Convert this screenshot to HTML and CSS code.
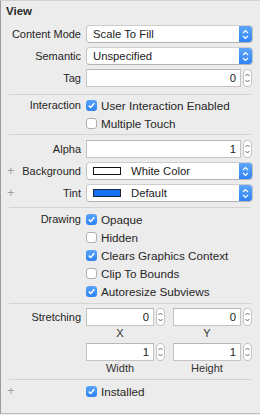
FILE: index.html
```html
<!DOCTYPE html>
<html lang="en">
<head>
    <meta charset="UTF-8">
    <title>View Attributes</title>
    <link rel="stylesheet" href="styles.css">
</head>
<body>

<div class="panel">
    <div class="header">View</div>

    <!-- content mode / semantic / tag -->
    <div class="section sec-top">
        <div class="row">
            <div class="label">Content Mode</div>
            <div class="popup"><span class="popup-text">Scale To Fill</span><span class="popup-arrows"><svg width="7" height="11" viewBox="0 0 7 11"><path d="M1 4 L3.5 1.5 L6 4 M1 7 L3.5 9.5 L6 7" fill="none" stroke="#fff" stroke-width="1.2"/></svg></span></div>
        </div>
        <div class="row">
            <div class="label">Semantic</div>
            <div class="popup"><span class="popup-text">Unspecified</span><span class="popup-arrows"><svg width="7" height="11" viewBox="0 0 7 11"><path d="M1 4 L3.5 1.5 L6 4 M1 7 L3.5 9.5 L6 7" fill="none" stroke="#fff" stroke-width="1.2"/></svg></span></div>
        </div>
        <div class="row">
            <div class="label">Tag</div>
            <div class="field-group">
                <div class="field">0</div>
                <div class="stepper"><svg width="7" height="14" viewBox="0 0 7 14"><path d="M1.5 5 L3.5 3 L5.5 5 M1.5 9 L3.5 11 L5.5 9" fill="none" stroke="#666" stroke-width="1"/></svg></div>
            </div>
        </div>
    </div>
    <div class="sep"></div>

    <!-- interaction -->
    <div class="section sec-checks">
        <div class="row check-row">
            <div class="label">Interaction</div>
            <span class="box on"><svg width="9" height="9" viewBox="0 0 9 9"><path d="M1.8 4.6 L3.7 6.5 L7.3 2.2" fill="none" stroke="#fff" stroke-width="1.5"/></svg></span>
            <span class="check-text">User Interaction Enabled</span>
        </div>
        <div class="row check-row">
            <div class="label"></div>
            <span class="box"></span>
            <span class="check-text">Multiple Touch</span>
        </div>
    </div>
    <div class="sep"></div>

    <!-- alpha / colors -->
    <div class="section sec-colors">
        <div class="row">
            <div class="label">Alpha</div>
            <div class="field-group">
                <div class="field">1</div>
                <div class="stepper"><svg width="7" height="14" viewBox="0 0 7 14"><path d="M1.5 5 L3.5 3 L5.5 5 M1.5 9 L3.5 11 L5.5 9" fill="none" stroke="#666" stroke-width="1"/></svg></div>
            </div>
        </div>
        <div class="row">
            <div class="label"><span class="plus">+</span>Background</div>
            <div class="popup"><span class="swatch white"></span><span class="popup-text">White Color</span><span class="popup-arrows"><svg width="7" height="11" viewBox="0 0 7 11"><path d="M1 4 L3.5 1.5 L6 4 M1 7 L3.5 9.5 L6 7" fill="none" stroke="#fff" stroke-width="1.2"/></svg></span></div>
        </div>
        <div class="row">
            <div class="label"><span class="plus">+</span>Tint</div>
            <div class="popup"><span class="swatch blue"></span><span class="popup-text">Default</span><span class="popup-arrows"><svg width="7" height="11" viewBox="0 0 7 11"><path d="M1 4 L3.5 1.5 L6 4 M1 7 L3.5 9.5 L6 7" fill="none" stroke="#fff" stroke-width="1.2"/></svg></span></div>
        </div>
    </div>
    <div class="sep"></div>

    <!-- drawing -->
    <div class="section sec-drawing">
        <div class="row check-row">
            <div class="label">Drawing</div>
            <span class="box on"><svg width="9" height="9" viewBox="0 0 9 9"><path d="M1.8 4.6 L3.7 6.5 L7.3 2.2" fill="none" stroke="#fff" stroke-width="1.5"/></svg></span>
            <span class="check-text">Opaque</span>
        </div>
        <div class="row check-row">
            <div class="label"></div>
            <span class="box"></span>
            <span class="check-text">Hidden</span>
        </div>
        <div class="row check-row">
            <div class="label"></div>
            <span class="box on"><svg width="9" height="9" viewBox="0 0 9 9"><path d="M1.8 4.6 L3.7 6.5 L7.3 2.2" fill="none" stroke="#fff" stroke-width="1.5"/></svg></span>
            <span class="check-text">Clears Graphics Context</span>
        </div>
        <div class="row check-row">
            <div class="label"></div>
            <span class="box"></span>
            <span class="check-text">Clip To Bounds</span>
        </div>
        <div class="row check-row">
            <div class="label"></div>
            <span class="box on"><svg width="9" height="9" viewBox="0 0 9 9"><path d="M1.8 4.6 L3.7 6.5 L7.3 2.2" fill="none" stroke="#fff" stroke-width="1.5"/></svg></span>
            <span class="check-text">Autoresize Subviews</span>
        </div>
    </div>
    <div class="sep"></div>

    <!-- stretching -->
    <div class="section sec-stretch">
        <div class="stretch-row">
            <div class="label">Stretching</div>
            <div class="pair">
                <div class="mini">
                    <div class="field-group">
                        <div class="field">0</div>
                        <div class="stepper"><svg width="7" height="14" viewBox="0 0 7 14"><path d="M1.5 5 L3.5 3 L5.5 5 M1.5 9 L3.5 11 L5.5 9" fill="none" stroke="#666" stroke-width="1"/></svg></div>
                    </div>
                    <div class="caption">X</div>
                </div>
                <div class="mini">
                    <div class="field-group">
                        <div class="field">0</div>
                        <div class="stepper"><svg width="7" height="14" viewBox="0 0 7 14"><path d="M1.5 5 L3.5 3 L5.5 5 M1.5 9 L3.5 11 L5.5 9" fill="none" stroke="#666" stroke-width="1"/></svg></div>
                    </div>
                    <div class="caption">Y</div>
                </div>
            </div>
        </div>
        <div class="stretch-row second">
            <div class="label"></div>
            <div class="pair">
                <div class="mini">
                    <div class="field-group">
                        <div class="field">1</div>
                        <div class="stepper"><svg width="7" height="14" viewBox="0 0 7 14"><path d="M1.5 5 L3.5 3 L5.5 5 M1.5 9 L3.5 11 L5.5 9" fill="none" stroke="#666" stroke-width="1"/></svg></div>
                    </div>
                    <div class="caption">Width</div>
                </div>
                <div class="mini">
                    <div class="field-group">
                        <div class="field">1</div>
                        <div class="stepper"><svg width="7" height="14" viewBox="0 0 7 14"><path d="M1.5 5 L3.5 3 L5.5 5 M1.5 9 L3.5 11 L5.5 9" fill="none" stroke="#666" stroke-width="1"/></svg></div>
                    </div>
                    <div class="caption">Height</div>
                </div>
            </div>
        </div>
    </div>
    <div class="sep"></div>

    <!-- installed -->
    <div class="section sec-installed">
        <div class="row check-row">
            <div class="label"><span class="plus">+</span></div>
            <span class="box on"><svg width="9" height="9" viewBox="0 0 9 9"><path d="M1.8 4.6 L3.7 6.5 L7.3 2.2" fill="none" stroke="#fff" stroke-width="1.5"/></svg></span>
            <span class="check-text">Installed</span>
        </div>
    </div>
</div>

</body>
</html>
```

FILE: styles.css
```css
body {
    margin: 0;
    padding: 0;
    background-color: #ececec;
    font-family: "Liberation Sans", Arial, sans-serif;
    font-size: 11px;
    color: #262626;
}
.panel {
    width: 259px;
    height: 412px;
    background-color: #ececec;
    border-left: 1px solid #9c9c9c;
    border-top: 1px solid #d2d2d2;
    border-bottom: 1px solid #bdbdbd;
}
.header {
    height: 22px;
    line-height: 21px;
    padding-left: 5px;
    font-weight: bold;
    font-size: 11.5px;
    color: #2a2a2a;
}
.sep {
    height: 1px;
    margin: 0 9px 0 8px;
    background-color: #d3d3d3;
}
.sec-top {
    padding-bottom: 5px;
}
.sec-checks {
    padding-top: 1px;
    padding-bottom: 2px;
}
.sec-colors {
    padding-top: 3px;
    padding-bottom: 3px;
}
.sec-drawing {
    padding-top: 2px;
    padding-bottom: 3px;
}
.sec-stretch {
    padding-top: 4px;
    padding-bottom: 4px;
}
.sec-installed {
    padding-top: 2px;
}
.row {
    display: flex;
    align-items: center;
    height: 22px;
}
.check-row {
    height: 18px;
}
.label {
    width: 80px;
    flex: none;
    display: flex;
    justify-content: flex-end;
    align-items: center;
    position: relative;
    margin-right: 5px;
    white-space: nowrap;
}
.plus {
    position: absolute;
    left: 6px;
    top: 50%;
    transform: translateY(-52%);
    color: #a0a0a0;
    font-size: 13px;
    font-weight: 300;
}
.popup {
    width: 165px;
    height: 16px;
    flex: none;
    display: flex;
    align-items: center;
    background-color: #fff;
    border: 1px solid #c4c4c4;
    border-top-color: #cdcdcd;
    border-bottom-color: #b3b3b3;
    border-radius: 4px;
    overflow: hidden;
}
.popup-text {
    flex: 1;
    padding-left: 6px;
    color: #222;
    font-size: 11.3px;
}
.popup-arrows {
    width: 13px;
    height: 16px;
    display: flex;
    align-items: center;
    justify-content: center;
    background: linear-gradient(#5ea5fa, #2f84f4);
}
.swatch {
    width: 26px;
    height: 6px;
    margin-left: 6px;
    border: 1px solid #111;
    flex: none;
}
.swatch.white {
    background-color: #fff;
}
.swatch.blue {
    background-color: #1572f2;
    border-color: #1c2a40;
}
.swatch + .popup-text {
    padding-left: 10px;
}
.field-group {
    display: flex;
    align-items: center;
    flex: none;
}
.field {
    width: 149px;
    height: 16px;
    line-height: 16px;
    text-align: right;
    padding-right: 4px;
    background-color: #fff;
    border: 1px solid #c4c4c4;
    border-top-color: #b6b6b6;
    color: #222;
    font-size: 11.3px;
    flex: none;
}
.stepper {
    width: 7px;
    height: 16px;
    margin-left: 2px;
    display: flex;
    align-items: center;
    justify-content: center;
    background-color: #fff;
    border: 1px solid #c4c4c4;
    border-radius: 4px;
    flex: none;
}
.box {
    width: 11px;
    height: 11px;
    box-sizing: border-box;
    border: 1px solid #b0b0b0;
    border-radius: 3px;
    background-color: #fff;
    display: flex;
    align-items: center;
    justify-content: center;
    flex: none;
}
.box.on {
    border: none;
    background: linear-gradient(#5aa3fa, #2d83f4);
}
.check-text {
    margin-left: 4px;
    white-space: nowrap;
    font-size: 11.7px;
}
.stretch-row {
    display: flex;
}
.stretch-row.second {
    margin-top: 3px;
}
.stretch-row .label {
    height: 18px;
}
.pair {
    display: flex;
    gap: 8px;
}
.mini .field {
    width: 62px;
}
.caption {
    width: 68px;
    text-align: center;
    height: 14px;
    line-height: 14px;
    color: #333;
}
```
